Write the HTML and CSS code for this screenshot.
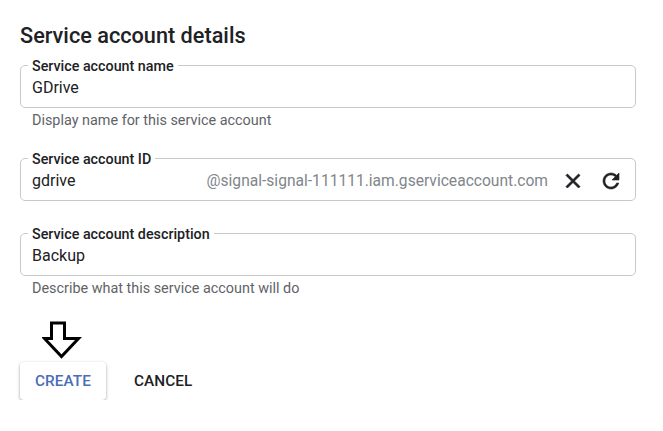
FILE: index.html
```html
<!DOCTYPE html>
<html lang="en">
<head>
<meta charset="utf-8">
<title>Service account details</title>
<link rel="stylesheet" href="styles.css">
</head>
<body>
<div class="page">
  <h1 class="title">Service account details</h1>

  <fieldset class="field field-first">
    <legend class="label">Service account name</legend>
    <div class="value">GDrive</div>
  </fieldset>
  <div class="helper">Display name for this service account</div>

  <fieldset class="field field-id">
    <legend class="label">Service account ID</legend>
    <div class="row">
      <div class="value grow">gdrive</div>
      <div class="suffix">@signal-signal-111111.iam.gserviceaccount.com</div>
      <span class="icon icon-close">
        <svg viewBox="0 0 24 24" width="24" height="24"><path d="M19 6.41 17.59 5 12 10.59 6.41 5 5 6.41 10.59 12 5 17.59 6.41 19 12 13.41 17.59 19 19 17.59 13.41 12z" fill="#202124" stroke="#202124" stroke-width="0.8"/></svg>
      </span>
      <span class="icon icon-refresh">
        <svg viewBox="0 0 24 24" width="24" height="24"><path d="M17.65 6.35C16.2 4.9 14.21 4 12 4c-4.42 0-7.99 3.58-7.99 8s3.57 8 7.99 8c3.730 0 6.84-2.55 7.73-6h-2.08c-.82 2.33-3.04 4-5.65 4-3.31 0-6-2.690-6-6s2.69-6 6-6c1.66 0 3.14.69 4.220 1.78L13 11h7V4l-2.35 2.35z" fill="#202124" stroke="#202124" stroke-width="0.6"/></svg>
      </span>
    </div>
  </fieldset>

  <fieldset class="field field-desc">
    <legend class="label">Service account description</legend>
    <div class="value">Backup</div>
  </fieldset>
  <div class="helper">Describe what this service account will do</div>

  <svg class="arrow" viewBox="0 0 40 40" width="40" height="40">
    <polygon points="9.5,3 22.5,3 22.5,18.5 36.5,18.5 19.5,36.5 2.5,18.5 9.5,18.5" fill="#fff" stroke="#000" stroke-width="3" stroke-linejoin="miter"/>
  </svg>

  <div class="actions">
    <button class="btn btn-create">CREATE</button>
    <button class="btn btn-cancel">CANCEL</button>
  </div>
</div>
</body>
</html>
```

FILE: styles.css
```css
* { box-sizing: border-box; }

body {
  margin: 0;
  background: #ffffff;
  font-family: Roboto, "Noto Sans", Arial, sans-serif;
  color: #202124;
}

.page {
  padding: 22px 27px 0 20px;
}

.title {
  margin: 0;
  font-size: 21.7px;
  line-height: 28px;
  font-weight: 500;
  color: #202124;
  letter-spacing: 0;
}

.field {
  margin: 7.5px 0 0;
  border: 1px solid #c9c9c9;
  border-radius: 5px;
  padding: 4px 12px 9px 11px;
  min-width: 0;
}

.field-id { margin-top: 20px; }
.field-desc { margin-top: 25px; }

.label {
  padding: 0 4px;
  margin-left: -4px;
  font-size: 14.3px;
  line-height: 16px;
  font-weight: 500;
  color: #202124;
}

.value {
  font-size: 16px;
  line-height: 20px;
  color: #202124;
}

.row {
  display: flex;
  align-items: center;
  height: 20px;
}

.grow { flex: 1; }

.suffix {
  font-size: 15.6px;
  line-height: 20px;
  color: #80868b;
  margin-right: 13px;
}

.icon {
  display: flex;
  width: 24px;
  height: 24px;
  margin: -2px 0;
}

.icon-refresh { margin-left: 14px; }

.helper {
  margin: 3px 0 0 12px;
  font-size: 14.4px;
  line-height: 20px;
  color: #5f6368;
}

.arrow {
  display: block;
  margin: 21.5px 0 0 22px;
}

.actions {
  display: flex;
  align-items: center;
  gap: 14px;
  margin-top: 2px;
}

.btn {
  font-family: Roboto, "Noto Sans", Arial, sans-serif;
  font-size: 15.3px;
  font-weight: 500;
  letter-spacing: 0.1px;
  height: 38px;
  padding: 0 15px;
  border: none;
  background: transparent;
  border-radius: 4px;
  cursor: pointer;
}

.btn-create {
  width: 86px;
  padding: 0;
  color: #4a6db5;
  background: #ffffff;
  box-shadow: 0 1px 3px rgba(0, 0, 0, 0.3), 0 2px 4px rgba(0, 0, 0, 0.08);
}

.btn-cancel {
  padding: 0 14px;
  color: #202124;
}
```
